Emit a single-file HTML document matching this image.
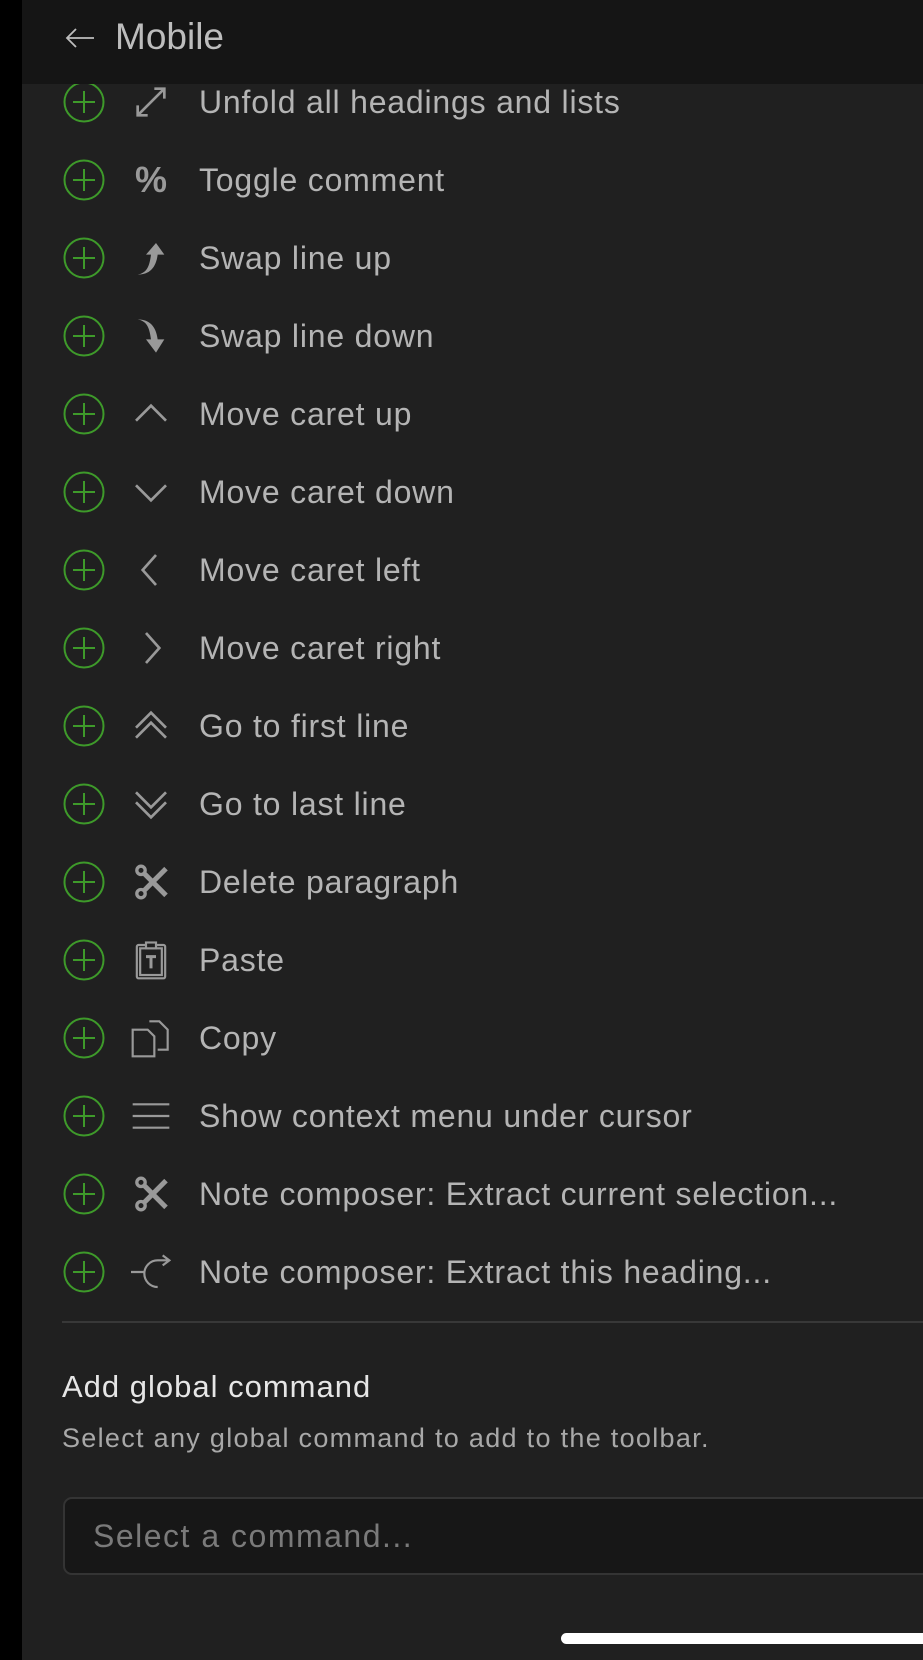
<!DOCTYPE html>
<html><head><meta charset="utf-8"><style>
*{margin:0;padding:0;box-sizing:border-box}
body{width:923px;height:1660px;background:#000;overflow:hidden;font-family:"Liberation Sans",sans-serif;position:relative}
.main{position:absolute;left:22px;top:0;width:901px;height:1660px;background:#202020}
.row{position:absolute;left:0;width:901px;height:78px}
.plus{position:absolute;left:41px;top:18px;width:42px;height:42px}
.ic{position:absolute;left:109px;top:19px;width:40px;height:40px}
.tx{position:absolute;left:177px;top:0;line-height:78px;font-size:32px;letter-spacing:0.8px;color:#b4b4b4;white-space:nowrap}
.hdr{position:absolute;left:22px;top:0;width:901px;height:84px;background:#151515}
.hdr span{position:absolute;left:93px;top:16px;font-size:37px;color:#bdbdbd}
</style></head><body>
<div class="main">
<div class="row" style="top:63px"><svg class="plus" viewBox="0 0 42 42"><circle cx="21" cy="21" r="19.5" fill="none" stroke="#3e9a2a" stroke-width="2"/><path d="M21 10v22M10 21h22" stroke="#3e9a2a" stroke-width="2"/></svg><svg class="ic" viewBox="0 0 24 24" fill="none" stroke="#999" stroke-width="1.6"><path d="M4 20L20 4M14 4h6v6M4 14v6h6"/></svg><div class="tx">Unfold all headings and lists</div></div>
<div class="row" style="top:141px"><svg class="plus" viewBox="0 0 42 42"><circle cx="21" cy="21" r="19.5" fill="none" stroke="#3e9a2a" stroke-width="2"/><path d="M21 10v22M10 21h22" stroke="#3e9a2a" stroke-width="2"/></svg><div class="ic" style="color:#999;font-size:36px;font-weight:bold;text-align:center;line-height:40px">%</div><div class="tx">Toggle comment</div></div>
<div class="row" style="top:219px"><svg class="plus" viewBox="0 0 42 42"><circle cx="21" cy="21" r="19.5" fill="none" stroke="#3e9a2a" stroke-width="2"/><path d="M21 10v22M10 21h22" stroke="#3e9a2a" stroke-width="2"/></svg><svg class="ic" viewBox="0 0 24 24" fill="#999"><path d="M4 22c5-1 7-4 8-12h-3l6-7 5 7h-4c-1 8-5 12-12 12z"/></svg><div class="tx">Swap line up</div></div>
<div class="row" style="top:297px"><svg class="plus" viewBox="0 0 42 42"><circle cx="21" cy="21" r="19.5" fill="none" stroke="#3e9a2a" stroke-width="2"/><path d="M21 10v22M10 21h22" stroke="#3e9a2a" stroke-width="2"/></svg><svg class="ic" viewBox="0 0 24 24" fill="#999"><path d="M4 2c5 1 7 4 8 12h-3l6 8 5-8h-4c-1-8-5-12-12-12z"/></svg><div class="tx">Swap line down</div></div>
<div class="row" style="top:375px"><svg class="plus" viewBox="0 0 42 42"><circle cx="21" cy="21" r="19.5" fill="none" stroke="#3e9a2a" stroke-width="2"/><path d="M21 10v22M10 21h22" stroke="#3e9a2a" stroke-width="2"/></svg><svg class="ic" viewBox="0 0 24 24" fill="none" stroke="#999" stroke-width="1.6"><path d="M3 16l9-9 9 9"/></svg><div class="tx">Move caret up</div></div>
<div class="row" style="top:453px"><svg class="plus" viewBox="0 0 42 42"><circle cx="21" cy="21" r="19.5" fill="none" stroke="#3e9a2a" stroke-width="2"/><path d="M21 10v22M10 21h22" stroke="#3e9a2a" stroke-width="2"/></svg><svg class="ic" viewBox="0 0 24 24" fill="none" stroke="#999" stroke-width="1.6"><path d="M3 8l9 9 9-9"/></svg><div class="tx">Move caret down</div></div>
<div class="row" style="top:531px"><svg class="plus" viewBox="0 0 42 42"><circle cx="21" cy="21" r="19.5" fill="none" stroke="#3e9a2a" stroke-width="2"/><path d="M21 10v22M10 21h22" stroke="#3e9a2a" stroke-width="2"/></svg><svg class="ic" viewBox="0 0 24 24" fill="none" stroke="#999" stroke-width="1.6"><path d="M15 3l-8 9 8 9"/></svg><div class="tx">Move caret left</div></div>
<div class="row" style="top:609px"><svg class="plus" viewBox="0 0 42 42"><circle cx="21" cy="21" r="19.5" fill="none" stroke="#3e9a2a" stroke-width="2"/><path d="M21 10v22M10 21h22" stroke="#3e9a2a" stroke-width="2"/></svg><svg class="ic" viewBox="0 0 24 24" fill="none" stroke="#999" stroke-width="1.6"><path d="M9 3l8 9-8 9"/></svg><div class="tx">Move caret right</div></div>
<div class="row" style="top:687px"><svg class="plus" viewBox="0 0 42 42"><circle cx="21" cy="21" r="19.5" fill="none" stroke="#3e9a2a" stroke-width="2"/><path d="M21 10v22M10 21h22" stroke="#3e9a2a" stroke-width="2"/></svg><svg class="ic" viewBox="0 0 24 24" fill="none" stroke="#999" stroke-width="1.6"><path d="M3 13l9-9 9 9M3 19l9-9 9 9"/></svg><div class="tx">Go to first line</div></div>
<div class="row" style="top:765px"><svg class="plus" viewBox="0 0 42 42"><circle cx="21" cy="21" r="19.5" fill="none" stroke="#3e9a2a" stroke-width="2"/><path d="M21 10v22M10 21h22" stroke="#3e9a2a" stroke-width="2"/></svg><svg class="ic" viewBox="0 0 24 24" fill="none" stroke="#999" stroke-width="1.6"><path d="M3 5l9 9 9-9M3 11l9 9 9-9"/></svg><div class="tx">Go to last line</div></div>
<div class="row" style="top:843px"><svg class="plus" viewBox="0 0 42 42"><circle cx="21" cy="21" r="19.5" fill="none" stroke="#3e9a2a" stroke-width="2"/><path d="M21 10v22M10 21h22" stroke="#3e9a2a" stroke-width="2"/></svg><svg class="ic" viewBox="0 0 24 24" fill="none" stroke="#999" stroke-width="2"><circle cx="6" cy="5" r="2.5"/><circle cx="6" cy="19" r="2.5"/><path d="M8 7l13 13M8 17L21 4" stroke-width="3"/></svg><div class="tx">Delete paragraph</div></div>
<div class="row" style="top:921px"><svg class="plus" viewBox="0 0 42 42"><circle cx="21" cy="21" r="19.5" fill="none" stroke="#3e9a2a" stroke-width="2"/><path d="M21 10v22M10 21h22" stroke="#3e9a2a" stroke-width="2"/></svg><svg class="ic" viewBox="0 0 24 24" fill="none" stroke="#999" stroke-width="1.3"><rect x="3.5" y="3" width="17" height="20" rx="1"/><rect x="5.5" y="5" width="13" height="16"/><rect x="9" y="1.5" width="6" height="3.5" fill="#202020"/><path d="M9 10h6M12 10v7" stroke-width="1.8"/></svg><div class="tx">Paste</div></div>
<div class="row" style="top:999px"><svg class="plus" viewBox="0 0 42 42"><circle cx="21" cy="21" r="19.5" fill="none" stroke="#3e9a2a" stroke-width="2"/><path d="M21 10v22M10 21h22" stroke="#3e9a2a" stroke-width="2"/></svg><svg class="ic" viewBox="0 0 24 24" fill="none" stroke="#999" stroke-width="1.3"><path d="M11 2h6l5 5v12h-6M1 7h9l4 4v12H1z"/></svg><div class="tx">Copy</div></div>
<div class="row" style="top:1077px"><svg class="plus" viewBox="0 0 42 42"><circle cx="21" cy="21" r="19.5" fill="none" stroke="#3e9a2a" stroke-width="2"/><path d="M21 10v22M10 21h22" stroke="#3e9a2a" stroke-width="2"/></svg><svg class="ic" viewBox="0 0 24 24" fill="none" stroke="#999" stroke-width="1.3"><path d="M1 5h22M1 12h22M1 19h22"/></svg><div class="tx">Show context menu under cursor</div></div>
<div class="row" style="top:1155px"><svg class="plus" viewBox="0 0 42 42"><circle cx="21" cy="21" r="19.5" fill="none" stroke="#3e9a2a" stroke-width="2"/><path d="M21 10v22M10 21h22" stroke="#3e9a2a" stroke-width="2"/></svg><svg class="ic" viewBox="0 0 24 24" fill="none" stroke="#999" stroke-width="2"><circle cx="6" cy="5" r="2.5"/><circle cx="6" cy="19" r="2.5"/><path d="M8 7l13 13M8 17L21 4" stroke-width="3"/></svg><div class="tx">Note composer: Extract current selection...</div></div>
<div class="row" style="top:1233px"><svg class="plus" viewBox="0 0 42 42"><circle cx="21" cy="21" r="19.5" fill="none" stroke="#3e9a2a" stroke-width="2"/><path d="M21 10v22M10 21h22" stroke="#3e9a2a" stroke-width="2"/></svg><svg class="ic" viewBox="0 0 24 24" fill="none" stroke="#999" stroke-width="1.3"><path d="M0 12h8M16 21a8 8 0 0 1 0-16h7M19 2l4 3-4 3"/></svg><div class="tx">Note composer: Extract this heading...</div></div>
<div style="position:absolute;left:40px;top:1321px;width:861px;height:2px;background:#383838"></div>
<div style="position:absolute;left:40px;top:1369px;font-size:31px;letter-spacing:1px;color:#e6e6e6">Add global command</div>
<div style="position:absolute;left:40px;top:1423px;font-size:27px;letter-spacing:1.3px;color:#a8a8a8">Select any global command to add to the toolbar.</div>
<div style="position:absolute;left:41px;top:1497px;width:880px;height:78px;background:#171717;border:2px solid #343434;border-radius:9px"><span style="position:absolute;left:28px;top:19px;font-size:32px;letter-spacing:1.5px;color:#7a7a7a">Select a command...</span></div>
<div style="position:absolute;left:539px;top:1633px;width:380px;height:11px;background:#fff;border-radius:6px"></div>
</div>
<div class="hdr"><svg style="position:absolute;left:43px;top:26px" width="30" height="24" viewBox="0 0 30 24" fill="none" stroke="#bdbdbd" stroke-width="1.8"><path d="M2 12h27M11 3L2 12l9 9"/></svg><span>Mobile</span></div>
</body></html>
